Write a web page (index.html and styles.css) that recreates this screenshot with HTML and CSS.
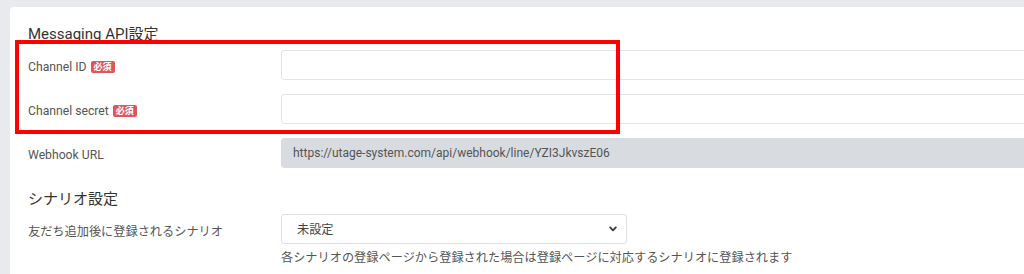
FILE: index.html
```html
<!DOCTYPE html>
<html lang="ja">
<head>
<meta charset="utf-8">
<title>Messaging API設定</title>
<link rel="stylesheet" href="styles.css">
</head>
<body>
<div class="page">
  <div class="card">
    <h2 class="section-title">Messaging API設定</h2>
    <div class="form-row">
      <label class="form-label">Channel ID <span class="badge">必須</span></label>
      <div class="form-field"><input class="form-control" type="text"></div>
    </div>
    <div class="form-row">
      <label class="form-label">Channel secret <span class="badge">必須</span></label>
      <div class="form-field"><input class="form-control" type="text"></div>
    </div>
    <div class="form-row">
      <label class="form-label">Webhook URL</label>
      <div class="form-field"><div class="form-control readonly">https://utage-system.com/api/webhook/line/YZI3JkvszE06</div></div>
    </div>

    <h2 class="section-title second">シナリオ設定</h2>
    <div class="form-row top">
      <label class="form-label">友だち追加後に登録されるシナリオ</label>
      <div class="form-field">
        <div class="select">
          <span>未設定</span>
          <svg class="chevron" width="8" height="6" viewBox="0 0 8 6"><path d="M1.2 1.4 L4 4.3 L6.8 1.4" fill="none" stroke="#343a40" stroke-width="1.8" stroke-linecap="round" stroke-linejoin="round"/></svg>
        </div>
        <p class="help">各シナリオの登録ページから登録された場合は登録ページに対応するシナリオに登録されます</p>
      </div>
    </div>
  </div>
  <div class="annotation"></div>
</div>
</body>
</html>
```
FILE: styles.css
```css
html, body {
  margin: 0;
  padding: 0;
  overflow: hidden;
  background: #e9eaed;
}
body {
  font-family: Roboto, "Noto Sans CJK JP", sans-serif;
  color: #555;
  font-size: 12.2px;
}
.page {
  position: relative;
  padding: 7px 0 0 10px;
  height: 274px;
  box-sizing: border-box;
  overflow: hidden;
}
.card {
  background: #fff;
  border-radius: 4px 0 0 0;
  width: 1100px;
  height: 300px;
  padding: 17px 18px 0 18px;
  box-sizing: border-box;
}
.section-title {
  margin: 0;
  font-size: 15px;
  font-weight: 400;
  line-height: 20px;
  color: #333;
}
.section-title.second {
  margin-top: 20px;
  line-height: 22px;
}
.form-row {
  display: grid;
  grid-template-columns: 253px 1fr;
  align-items: center;
  margin-top: 6px;
}
.form-row + .form-row {
  margin-top: 14px;
}
.form-row.top {
  align-items: start;
  margin-top: 4px;
}
.form-row.top .form-label {
  line-height: 30px;
}
.form-label {
  display: flex;
  align-items: center;
  gap: 4px;
  color: #555;
  padding-top: 3px;
}
.badge {
  display: inline-block;
  background: #e0555a;
  color: #fff;
  font-size: 9px;
  font-weight: 700;
  line-height: 12px;
  padding: 0 3px;
  border-radius: 2px;
}
.form-control {
  display: block;
  width: 100%;
  height: 30px;
  box-sizing: border-box;
  border: 1px solid #e2e4e7;
  border-radius: 3px;
  background: #fff;
  padding: 0 11px;
  font: inherit;
}
.form-control.readonly {
  background: #d8dbe0;
  border-color: #d8dbe0;
  line-height: 28px;
  font-size: 12px;
  color: #555;
}
.form-field {
  min-width: 0;
}
.select {
  width: 346px;
  height: 30px;
  box-sizing: border-box;
  border: 1px solid #dcdfe3;
  border-radius: 3px;
  display: flex;
  align-items: center;
  justify-content: space-between;
  padding: 0 9px 0 15px;
  color: #444;
}
.help {
  margin: 5px 0 0 0;
  line-height: 18px;
  color: #555;
}
.annotation {
  position: absolute;
  left: 15px;
  top: 40px;
  width: 605px;
  height: 94px;
  box-sizing: border-box;
  border: 4px solid #ff0000;
}
```
